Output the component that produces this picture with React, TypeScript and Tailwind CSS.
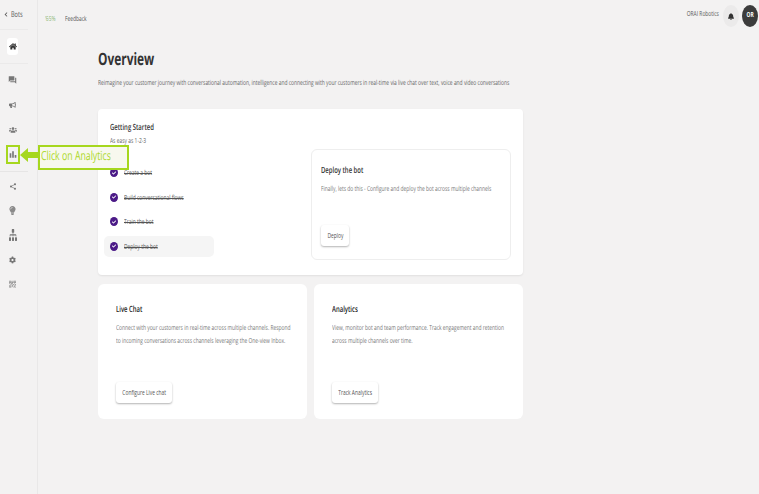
import React from 'react';
import { FaHome, FaBullhorn, FaUsers, FaLightbulb, FaSitemap, FaCog, FaBell, FaCheck, FaChevronLeft } from 'react-icons/fa';
import { MdForum, MdBarChart, MdShare, MdQrCode2 } from 'react-icons/md';

// the screenshot is squeezed sideways, so text gets narrowed too
function Narrow({ children, className = 'origin-left' }: { children: React.ReactNode; className?: string }) {
  return <span className={`inline-block scale-x-[0.7] whitespace-nowrap ${className}`}>{children}</span>;
}

function NavIcon({ children }: { children: React.ReactNode }) {
  return <div className="flex items-center justify-center text-[#777]">{children}</div>;
}

function Step({ label, active }: { label: string; active?: boolean }) {
  return (
    <div className={`flex h-[21px] w-[110px] items-center gap-[6px] rounded-[5px] pl-[6px] ${active ? 'bg-[#f5f5f5]' : ''}`}>
      <span className="flex h-[9px] w-[8px] shrink-0 items-center justify-center rounded-[50%] bg-[#4b1a87] text-white">
        <FaCheck className="h-[4px] w-[4px]" />
      </span>
      <span className="pt-[3px] text-[7px] leading-[10px] text-[#555]">
        <Narrow className="origin-left line-through">{label}</Narrow>
      </span>
    </div>
  );
}

function ActionButton({ children, className }: { children: React.ReactNode; className: string }) {
  return (
    <button className={`flex h-[21px] items-center justify-center rounded-[3px] bg-white pt-[1px] text-[7px] text-[#555] shadow-[0_1px_2px_rgba(0,0,0,0.3)] ${className}`}>
      <Narrow className="origin-center">{children}</Narrow>
    </button>
  );
}

function InfoCard({ title, lines, action, buttonWidth }: { title: string; lines: string[]; action: string; buttonWidth: string }) {
  return (
    <div className="flex h-[135px] w-[209px] flex-col rounded-[6px] bg-white pl-[18px] pt-[21px]">
      <h3 className="text-[8.5px] leading-[10px] font-semibold text-[#222]"><Narrow>{title}</Narrow></h3>
      <div className="mt-[7px] text-[7px] leading-[13px] text-[#777]">
        {lines.map((line) => (
          <p key={line}><Narrow>{line}</Narrow></p>
        ))}
      </div>
      <div className="mt-auto mb-[16px]">
        <ActionButton className={buttonWidth}>{action}</ActionButton>
      </div>
    </div>
  );
}

export default function App() {
  return (
    <div className="relative flex h-[494px] w-[759px] overflow-hidden bg-[#f3f2f2] font-['Open_Sans',sans-serif] [text-rendering:geometricPrecision]">
      {/* Sidebar */}
      <aside className="flex w-[38px] shrink-0 flex-col border-r border-[#e9e8e8] pr-[9px]">
        <div className="flex h-[30px] items-center gap-[3px] border-b border-[#ebeaea] pl-[4px] text-[8px] text-[#555]">
          <FaChevronLeft className="h-[5px] w-[4px]" />
          <Narrow>Bots</Narrow>
        </div>
        <div className="flex h-[34px] items-center border-b border-[#ebeaea] pl-[7px]">
          <span className="flex h-[17px] w-[11px] items-center justify-center rounded-[3px] bg-white">
            <FaHome className="h-[9px] w-[8px] text-[#333]" />
          </span>
        </div>
        <div className="grid w-[25px] auto-rows-[25px] pt-[3px] pb-[4px]">
          <NavIcon><MdForum className="h-[10px] w-[9px]" /></NavIcon>
          <NavIcon><FaBullhorn className="h-[8px] w-[7px]" /></NavIcon>
          <NavIcon><FaUsers className="h-[8px] w-[8px]" /></NavIcon>
          <NavIcon><MdBarChart className="h-[11px] w-[10px]" /></NavIcon>
        </div>
        <div className="border-t border-[#e6e5e5] pt-[2px]">
          <div className="grid w-[25px] auto-rows-[24.5px]">
            <NavIcon><MdShare className="h-[9px] w-[8px]" /></NavIcon>
            <NavIcon><FaLightbulb className="h-[9px] w-[7px] text-[#8a8a8a]" /></NavIcon>
            <NavIcon><FaSitemap preserveAspectRatio="none" className="h-[12px] w-[8px]" /></NavIcon>
            <NavIcon><FaCog className="h-[8px] w-[7px]" /></NavIcon>
            <NavIcon><MdQrCode2 className="h-[10px] w-[9px] text-[#8a8a8a]" /></NavIcon>
          </div>
        </div>
      </aside>

      <div className="flex min-w-0 flex-1 flex-col">
        {/* Top bar */}
        <header className="flex h-[37px] items-start justify-between pl-[7px] pr-[1px] pt-[5px]">
          <div className="mt-[10px] flex items-center text-[7px]">
            <span className="w-[20px] text-[#8fb878]"><Narrow>{'\u201965%'}</Narrow></span>
            <span className="text-[#555]"><Narrow>Feedback</Narrow></span>
          </div>
          <div className="flex items-center gap-[3px]">
            <span className="mr-[1px] pb-[2px] text-[7px] text-[#555]"><Narrow className="origin-right">ORAI Robotics</Narrow></span>
            <span className="flex h-[22px] w-[16px] items-center justify-center rounded-[50%] bg-[#ebeaea] text-[#333]">
              <FaBell className="h-[7px] w-[6px]" />
            </span>
            <span className="flex h-[22px] w-[16px] items-center justify-center rounded-[50%] bg-[#3c3c3c] text-[7px] font-bold text-white">
              <Narrow className="origin-center">OR</Narrow>
            </span>
          </div>
        </header>

        {/* Content */}
        <main className="ml-[60px] flex w-[425px] flex-col">
          <h1 className="mt-[12px] text-[17px] leading-[20px] font-bold text-[#333]"><Narrow>Overview</Narrow></h1>
          <p className="mt-[10px] text-[7px] leading-[10px] text-[#666]">
            <Narrow>Reimagine your customer journey with conversational automation, intelligence and connecting with your customers in real-time via live chat over text, voice and video conversations</Narrow>
          </p>

          <section className="mt-[20px] flex h-[166px] rounded-[4px] bg-white pl-[6px] shadow-[0_1px_2px_rgba(0,0,0,0.08)]">
            <div className="w-[207px] pt-[14px]">
              <h2 className="pl-[6px] text-[8.5px] leading-[10px] font-semibold text-[#333]"><Narrow>Getting Started</Narrow></h2>
              <p className="mt-[4px] pl-[6px] text-[7px] leading-[9px] text-[#666]"><Narrow>As easy as 1-2-3</Narrow></p>
              <div className="mt-[16px] flex flex-col gap-[3.5px]">
                <Step label="Create a bot" />
                <Step label="Build conversational flows" />
                <Step label="Train the bot" />
                <Step label="Deploy the bot" active />
              </div>
            </div>
            <div className="mt-[40px] flex h-[111px] w-[200px] flex-col rounded-[6px] border border-[#eeeeee] pl-[9px] pt-[16px]">
              <h3 className="text-[8.5px] leading-[10px] font-semibold text-[#333]"><Narrow>Deploy the bot</Narrow></h3>
              <p className="mt-[9px] text-[7px] leading-[9px] text-[#777]">
                <Narrow>Finally, lets do this - Configure and deploy the bot across multiple channels</Narrow>
              </p>
              <div className="mt-auto mb-[13px]">
                <ActionButton className="w-[28px]">Deploy</ActionButton>
              </div>
            </div>
          </section>

          <div className="mt-[9px] flex gap-[7px]">
            <InfoCard
              title="Live Chat"
              lines={[
                'Connect with your customers in real-time across multiple channels. Respond',
                'to incoming conversations across channels leveraging the One-view Inbox.',
              ]}
              action="Configure Live chat"
              buttonWidth="w-[56px]"
            />
            <InfoCard
              title="Analytics"
              lines={[
                'View, monitor bot and team performance. Track engagement and retention',
                'across multiple channels over time.',
              ]}
              action="Track Analytics"
              buttonWidth="w-[46px]"
            />
          </div>
        </main>
      </div>

      {/* Tutorial callout over the page */}
      <div className="absolute left-[6px] top-[145px] h-[19px] w-[14px] border-[2px] border-[#a6d71e]" />
      <svg className="absolute left-[20px] top-[148px] h-[14px] w-[19px]" viewBox="0 0 19 14">
        <path d="M0 7 L8 0 V4 H19 V10 H8 V14 Z" fill="#a6d71e" />
      </svg>
      <div className="absolute left-[38px] top-[145px] flex h-[25px] w-[91px] items-center border-[2px] border-[#a6d71e] bg-[#f7f8ee] pb-[2px] pl-[1px] text-[12.5px] text-[#add82a]">
        <Narrow>Click on Analytics</Narrow>
      </div>
    </div>
  );
}
